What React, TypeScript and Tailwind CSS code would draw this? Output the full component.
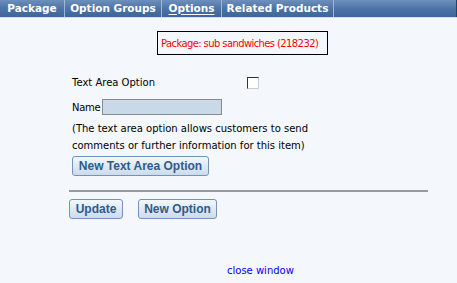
import React from 'react';

const tabs = [
  { label: 'Package', w: 'w-[65px]' },
  { label: 'Option Groups', w: 'w-[97px]' },
  { label: 'Options', w: 'w-[60px]', active: true },
  { label: 'Related Products', w: 'w-[112px]' },
];

const btn =
  "rounded-[3px] border border-[#7393b7] bg-gradient-to-b from-[#f3f7fb] to-[#ccdbeb] px-[5px] font-['Liberation_Sans',Arial,sans-serif] text-[12px] font-bold leading-none text-[#2f5b8a]";

export default function App() {
  return (
    <div className="h-[283px] w-[457px] overflow-hidden bg-[#f4f7fb] font-['DejaVu_Sans',Verdana,sans-serif] text-[10px] text-black">
      <div className="flex h-[17px] border-r border-[#23436b] bg-gradient-to-b from-[#6d8fbb] via-[#4d74a8] to-[#3c6598]">
        {tabs.map((t) => (
          <div
            key={t.label}
            className={`${t.w} flex items-center justify-center border-r border-[#9fb6d2] text-[10.5px] font-bold text-white`}
          >
            <span className={t.active ? 'underline underline-offset-2' : ''}>{t.label}</span>
          </div>
        ))}
      </div>
      <div className="h-px bg-[#d3deeb]" />

      <div className="ml-[157px] mt-[13px] flex h-[24px] w-[171px] items-center whitespace-nowrap border border-black pl-[3px] tracking-[-0.6px] text-[red]">
        Package: sub sandwiches (218232)
      </div>

      <div className="ml-[72px] mt-[20px]">
        <div className="flex items-center">
          <span className="w-[175px]">Text Area Option</span>
          <span className="h-[12px] w-[12px] border border-t-[#333] border-l-[#333] border-r-[#ccc] border-b-[#ccc] bg-white" />
        </div>
        <div className="mt-[9px] flex items-center">
          <span className="w-[30px] tracking-[-0.3px]">Name</span>
          <span className="h-[16px] w-[120px] border border-[#8a8a8a] bg-[#c9d9e7]" />
        </div>
        <p className="mt-[5px] leading-[17px]">
          (The text area option allows customers to send
          <br />
          comments or further information for this item)
        </p>
        <button className={`${btn} mt-[2px] h-[20px] w-[137px]`}>New Text Area Option</button>
      </div>

      <div className="ml-[69px] mt-[14px] h-[2px] w-[359px] bg-[#9a9a9a]" />

      <div className="ml-[69px] mt-[7px] flex gap-[15px]">
        <button className={`${btn} h-[20px] w-[54px]`}>Update</button>
        <button className={`${btn} h-[20px] w-[79px]`}>New Option</button>
      </div>

      <div className="mt-[44px] pl-[227px] text-[#0000ff]">close window</div>
    </div>
  );
}
